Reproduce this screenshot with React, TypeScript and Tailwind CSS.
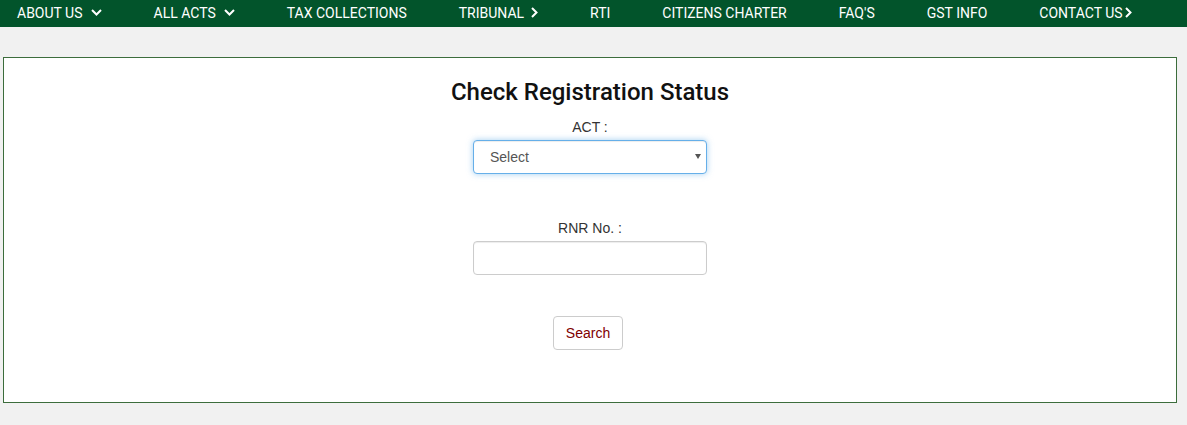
import { useState } from "react";

const navItems: { label: string; icon?: "down" | "right"; tight?: boolean }[] = [
  { label: "ABOUT US", icon: "down" },
  { label: "ALL ACTS", icon: "down" },
  { label: "TAX COLLECTIONS" },
  { label: "TRIBUNAL", icon: "right" },
  { label: "RTI" },
  { label: "CITIZENS CHARTER" },
  { label: "FAQ'S" },
  { label: "GST INFO" },
  { label: "CONTACT US", icon: "right", tight: true },
];

function ChevronDown() {
  return (
    <svg width="11" height="7" viewBox="0 0 11 7" className="shrink-0">
      <path d="M1 1l4.5 4.5L10 1" fill="none" stroke="white" strokeWidth="2" />
    </svg>
  );
}

function ChevronRight() {
  return (
    <svg width="7" height="11" viewBox="0 0 7 11" className="shrink-0">
      <path d="M1 1l4.5 4.5L1 10" fill="none" stroke="white" strokeWidth="2" />
    </svg>
  );
}

export default function App() {
  const [act, setAct] = useState("");
  const [rnr, setRnr] = useState("");

  return (
    <div className="min-h-[425px] bg-[#f1f1f1]">
      {/* Top nav */}
      <nav className="flex h-[27px] items-center gap-[52px] bg-[#02542b] pb-[2px] pl-[17px] font-['Roboto',sans-serif] text-[14px] text-white">
        {navItems.map((item) => (
          <a
            key={item.label}
            href="#"
            className={`flex items-center whitespace-nowrap leading-none ${
              item.tight ? "gap-[2px]" : item.icon === "down" ? "gap-[8px]" : "gap-[7px]"
            }`}
          >
            {item.label}
            {item.icon === "down" && <ChevronDown />}
            {item.icon === "right" && <ChevronRight />}
          </a>
        ))}
      </nav>

      {/* Card */}
      <div className="ml-[3px] mr-[10px] mt-[30px] border border-[#3c6d3c] bg-white pb-[52px] pt-[21px]">
        <div className="flex flex-col items-center">
          <h3 className="font-['Roboto',sans-serif] text-[24px] font-medium leading-[26.4px] text-[#111]">
            Check Registration Status
          </h3>

          <label className="mt-[12px] font-['Liberation_Sans',Arial,sans-serif] text-[14px] leading-[20px] text-[#333]">
            ACT :
          </label>
          <div className="relative mt-[3px] w-[234px]">
            <select
              value={act}
              onChange={(e) => setAct(e.target.value)}
              className="h-[34px] w-full appearance-none rounded-[4px] border border-[#66afe9] bg-white pl-4 pr-6 font-['Liberation_Sans',Arial,sans-serif] text-[14px] text-[#555] shadow-[inset_0_1px_1px_rgba(0,0,0,0.075),0_0_6px_rgba(102,175,233,0.6)] outline-none"
            >
              <option value="">Select</option>
              <option value="vat">VAT</option>
              <option value="cst">CST</option>
            </select>
            <svg
              width="6"
              height="5"
              viewBox="0 0 6 5"
              className="pointer-events-none absolute right-[6px] top-[14px]"
            >
              <path d="M0 0h6L3 5z" fill="#555" />
            </svg>
          </div>

          <label className="mt-[44px] font-['Liberation_Sans',Arial,sans-serif] text-[14px] leading-[20px] text-[#333]">
            RNR No. :
          </label>
          <input
            type="text"
            value={rnr}
            onChange={(e) => setRnr(e.target.value)}
            className="mt-[3px] h-[34px] w-[234px] rounded-[4px] border border-[#ccc] bg-white px-3 font-['Liberation_Sans',Arial,sans-serif] text-[14px] text-[#555] shadow-[inset_0_1px_1px_rgba(0,0,0,0.075)] outline-none"
          />

          <button
            type="button"
            className="mr-[4px] mt-[41px] h-[34px] rounded-[4px] border border-[#ccc] bg-white px-3 font-['Liberation_Sans',Arial,sans-serif] text-[14px] text-[#800000]"
          >
            Search
          </button>
        </div>
      </div>
    </div>
  );
}
